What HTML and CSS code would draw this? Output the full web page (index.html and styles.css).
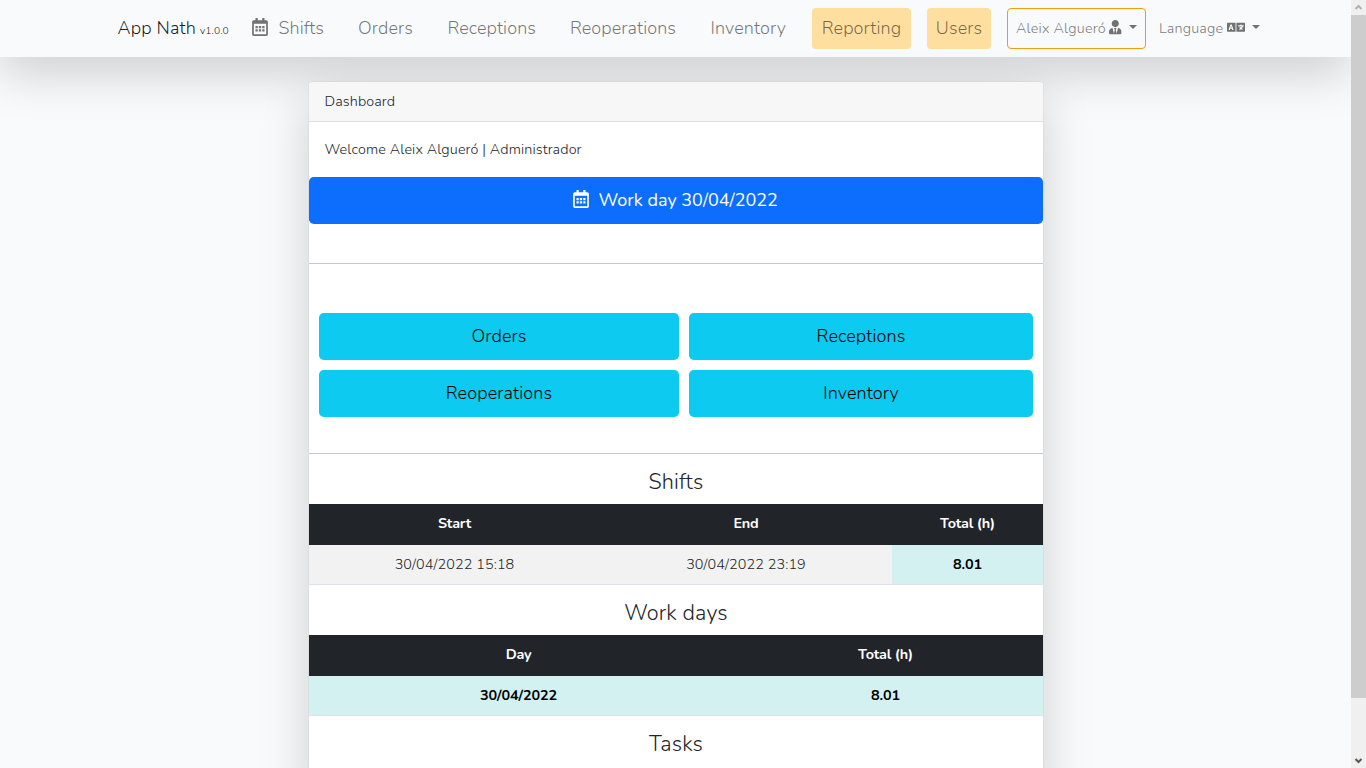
FILE: index.html
```html
<!DOCTYPE html>
<html lang="en">
<head>
<meta charset="utf-8">
<title>App Nath</title>
<link rel="stylesheet" href="styles.css">
</head>
<body>
<svg class="defs" width="0" height="0" aria-hidden="true">
  <symbol id="calendar" viewBox="0 0 448 512"><path d="M96 224h64v64H96zM192 224h64v64h-64zM288 224h64v64h-64zM96 320h64v64H96zM192 320h64v64h-64zM288 320h64v64h-64z"/><path d="M448 112v352c0 26.500-21.500 48-48 48H48c-26.500 0-48-21.500-48-48V112c0-26.500 21.500-48 48-48h48V12c0-6.600 5.400-12 12-12h40c6.600 0 12 5.400 12 12v52h128V12c0-6.600 5.400-12 12-12h40c6.600 0 12 5.400 12 12v52h48c26.500 0 48 21.500 48 48zm-48 346V160H48v298c0 3.300 2.700 6 6 6h340c3.300 0 6-2.700 6-6z"/></symbol>
  <symbol id="user-tie" viewBox="0 0 448 512"><path d="M224 256c70.700 0 128-57.300 128-128S294.700 0 224 0 96 57.300 96 128s57.300 128 128 128zm95.800 32.600L272 480l-32-136 32-56h-96l32 56-32 136-47.800-191.400C56.900 292 0 350.300 0 422.400V464c0 26.500 21.500 48 48 48h352c26.500 0 48-21.500 48-48v-41.600c0-72.100-56.900-130.400-128.200-133.800z"/></symbol>
  <symbol id="language" viewBox="0 0 640 512"><path d="M152.100 236.200c-3.500-12.100-7.800-33.200-7.800-33.200h-.5s-4.300 21.100-7.800 33.200l-11.100 37.500H163zM616 96H336v320h280c13.300 0 24-10.700 24-24V120c0-13.300-10.700-24-24-24zm-24 120c0 6.600-5.400 12-12 12h-11.400c-6.900 23.600-21.700 47.400-42.700 69.900 8.400 6.400 17.100 12.500 26.100 18 5.500 3.400 7.300 10.500 4.100 16.200l-7.900 13.900c-3.400 5.900-10.900 7.800-16.700 4.300-12.600-7.800-24.500-16.100-35.400-24.900-10.900 8.700-22.700 17.100-35.400 24.900-5.800 3.500-13.300 1.600-16.700-4.300l-7.900-13.900c-3.200-5.600-1.400-12.800 4.200-16.200 9.300-5.700 18-11.700 26.100-18-7.900-8.400-14.900-17-21-25.700-4-5.700-2.200-13.600 3.700-17.100l6.500-3.900 7.300-4.300c5.400-3.200 12.400-1.700 16 3.400 5 7 10.800 14 17.400 20.900 13.500-14.200 23.800-28.900 30-43.200H412c-6.600 0-12-5.400-12-12v-16c0-6.600 5.400-12 12-12h64v-16c0-6.600 5.400-12 12-12h16c6.600 0 12 5.400 12 12v16h64c6.600 0 12 5.400 12 12zM0 120v272c0 13.300 10.700 24 24 24h280V96H24c-13.300 0-24 10.700-24 24zm58.900 216.100L116.400 167c1.700-4.900 6.200-8.100 11.400-8.100h32.500c5.100 0 9.700 3.300 11.400 8.100l57.500 169.100c2.600 7.800-3.100 15.900-11.400 15.900h-22.900a12 12 0 0 1-11.500-8.600l-9.400-31.900h-60.200l-9.100 31.800c-1.500 5.100-6.200 8.700-11.500 8.700H70.300c-8.200 0-14-8.100-11.400-15.900z"/></symbol>
</svg>
<div class="window">
  <div class="page">
    <nav class="navbar">
      <a class="brand"><span class="brand-name">App Nath</span><span class="version">v1.0.0</span></a>
      <a class="link shifts"><svg class="cal"><use href="#calendar"/></svg><span>Shifts</span></a>
      <a class="link orders">Orders</a>
      <a class="link receptions">Receptions</a>
      <a class="link reoperations">Reoperations</a>
      <a class="link inventory">Inventory</a>
      <a class="link admin reporting">Reporting</a>
      <a class="link admin users">Users</a>
      <a class="menu user"><span class="user-name">Aleix Algueró</span><svg class="tie"><use href="#user-tie"/></svg><i class="caret"></i></a>
      <a class="menu lang"><span class="lang-name">Language</span><svg class="lang-icon"><use href="#language"/></svg><i class="caret"></i></a>
    </nav>
    <main class="card">
      <header class="card-header">Dashboard</header>
      <p class="welcome">Welcome Aleix Algueró | Administrador</p>
      <a class="btn primary"><svg class="cal"><use href="#calendar"/></svg><span>Work day 30/04/2022</span></a>
      <hr class="rule-top">
      <div class="actions">
        <a class="btn info">Orders</a>
        <a class="btn info">Receptions</a>
        <a class="btn info">Reoperations</a>
        <a class="btn info">Inventory</a>
      </div>
      <hr>
      <h4>Shifts</h4>
      <table class="shift-table">
        <colgroup><col class="c-start"><col class="c-end"><col></colgroup>
        <thead><tr><th>Start</th><th>End</th><th>Total (h)</th></tr></thead>
        <tbody><tr><td>30/04/2022 15:18</td><td>30/04/2022 23:19</td><td class="total">8.01</td></tr></tbody>
      </table>
      <h4>Work days</h4>
      <table class="day-table">
        <colgroup><col class="c-day"><col></colgroup>
        <thead><tr><th>Day</th><th>Total (h)</th></tr></thead>
        <tbody><tr><td class="total">30/04/2022</td><td class="total">8.01</td></tr></tbody>
      </table>
      <h4>Tasks</h4>
    </main>
  </div>
  <div class="scrollbar">
    <svg class="arrow up" viewBox="0 0 15 15"><path d="M4.500 9L7.500 6l3 3"/></svg>
    <div class="thumb"></div>
    <svg class="arrow down" viewBox="0 0 15 15"><path d="M4.500 6l3 3 3-3"/></svg>
  </div>
</div>
</body>
</html>
```
FILE: styles.css
```css
* { box-sizing: border-box; }
body { margin: 0; overflow: hidden; background: #f8fafc; color: #212529; font: 350 14.4px/23px Nunito, Lato, sans-serif; letter-spacing: .1px; }
.defs { display: none; }
svg { fill: currentColor; flex: none; }
.window { display: flex; height: 768px; }
.page { width: 1351px; height: 768px; overflow: hidden; }

.navbar { display: flex; align-items: center; height: 57px; padding-left: 117.500px; background: #f8fafc; box-shadow: 0 16px 48px rgba(0,0,0,.175); white-space: nowrap; }
.brand { display: flex; align-items: baseline; width: 118.500px; padding-top: 2px; font-size: 18px; letter-spacing: .2px; color: rgba(0,0,0,.9); }
.brand-name { width: 82.500px; }
.version { font-size: 10.300px; letter-spacing: .1px; }
.link { display: flex; align-items: center; justify-content: center; height: 41px; border-radius: 4px; font-size: 18px; font-weight: 350; letter-spacing: .1px; color: rgba(0,0,0,.55); }
.cal { width: 16px; height: 18px; margin-bottom: 3px; }
.shifts { width: 104.500px; gap: 10px; }
.orders { width: 90px; }
.receptions { width: 122.500px; }
.reoperations { width: 140px; }
.inventory { width: 110.500px; }
.admin { background: #ffdf9f; }
.reporting { width: 99px; margin-left: 8.500px; }
.users { width: 64px; margin: 0 16px; }
.menu { display: flex; align-items: center; height: 41px; color: rgba(0,0,0,.55); }
.user { width: 139px; padding-left: 8px; border: 1px solid #f39c12; border-radius: 4px; letter-spacing: .2px; }
.user-name { width: 93px; }
.tie { width: 12.600px; height: 14.400px; margin-bottom: 2px; }
.caret { margin: -3px 0 0 7px; border: 4.500px solid transparent; border-top-color: currentColor; border-bottom: 0; }
.lang { padding-left: 13px; letter-spacing: .15px; }
.lang-name { width: 67.500px; }
.lang-icon { width: 18px; height: 14.400px; margin-bottom: 2px; }

.card { width: 734px; height: 720px; margin: 25px 0 0 309px; background: #fff; border-radius: 4px; box-shadow: 0 16px 48px rgba(0,0,0,.175), 0 0 0 1px rgba(0,0,0,.03); }
.card-header { height: 40px; padding: 8px 15.500px; border-bottom: 1px solid #dfdfdf; border-radius: 4px 4px 0 0; background: #f7f7f7; }
.welcome { margin: 0; padding: 16px 15.500px; letter-spacing: .12px; }
.btn { display: flex; align-items: center; justify-content: center; height: 47px; border-radius: 4.800px; font-size: 18px; letter-spacing: .12px; }
.primary { gap: 9.500px; padding-right: 1px; background: #0d6efd; color: #fff; font-weight: 400; letter-spacing: 0; }
.info { background: #0dcaf0; color: #000; }
hr { height: 1px; margin: 0; border: 0; background: #c7c8c9; }
.rule-top { margin-top: 39px; }
.actions { display: grid; grid-template-columns: 360px 344px; gap: 10px; padding: 49px 10px 36px; }
h4 { height: 50px; margin: 0; padding-top: 15px; font-size: 21.600px; line-height: 26px; font-weight: 350; letter-spacing: .15px; text-align: center; }
table { width: 734px; border-collapse: separate; border-spacing: 0; table-layout: fixed; text-align: center; }
.c-start { width: 291px; }
.c-end { width: 292px; }
.c-day { width: 419px; }
th { height: 41px; padding: 0 0 2px; background: #212529; color: #fff; letter-spacing: -.2px; }
td { height: 40px; padding: 0; border-bottom: 1px solid #dee2e6; background: #f2f2f2; }
.total { background: #d3f1f1; color: #000; font-weight: 700; letter-spacing: -.1px; }

.scrollbar { display: flex; flex-direction: column; width: 15px; background: #f0f0f0; }
.arrow { width: 15px; height: 15px; fill: none; stroke-width: 2; }
.up { stroke: #b0b0b0; }
.down { margin-top: auto; stroke: #5c5751; }
.thumb { height: 683px; background: #cdcdcd; }
```
